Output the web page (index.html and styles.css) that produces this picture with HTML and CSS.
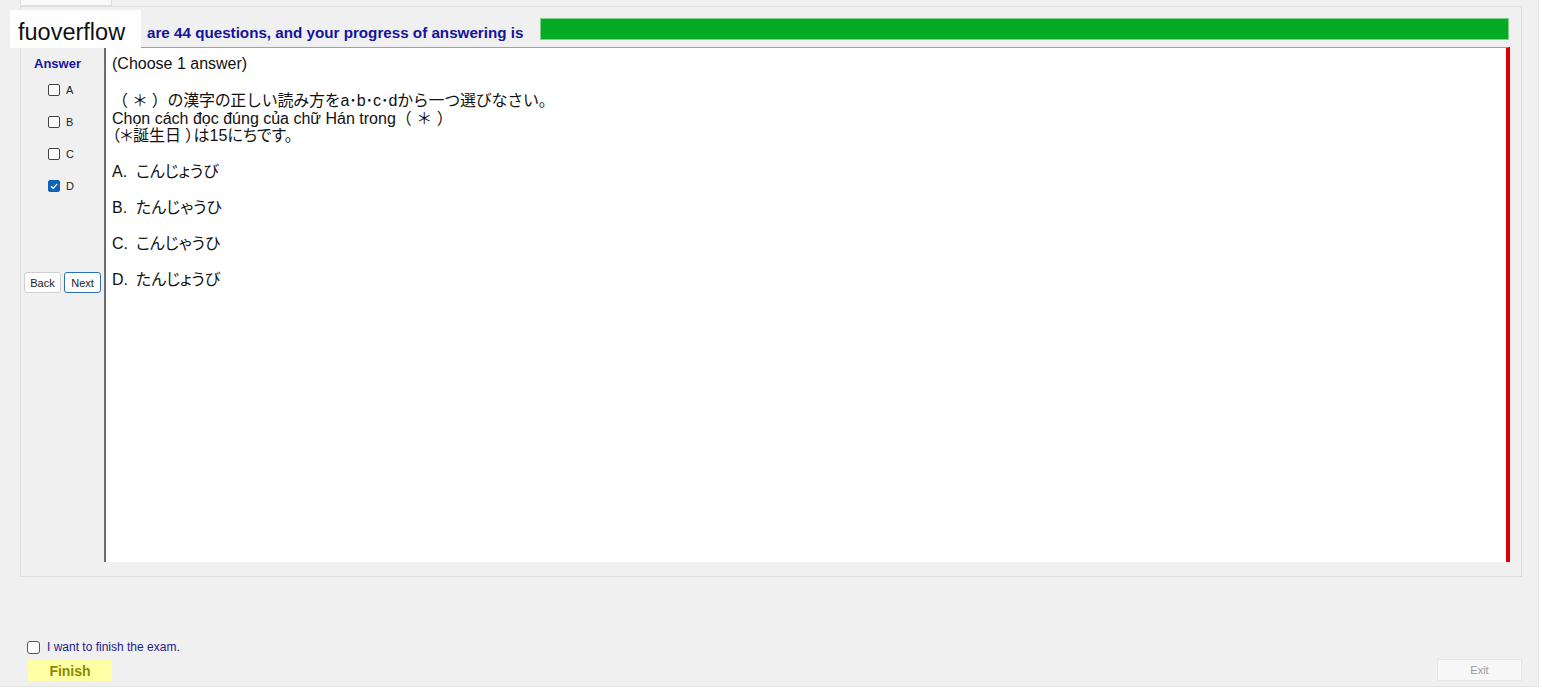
FILE: index.html
```html
<!DOCTYPE html>
<html lang="en">
<head>
  <meta charset="UTF-8" />
  <title>Exam</title>
  <link rel="stylesheet" href="styles.css">
</head>
<body>
  <div class="window">
    <div class="tab"></div>
    <div class="panel">
      <div class="head">
        <span class="head-text">are 44 questions, and your progress of answering is</span>
        <div class="progress"></div>
      </div>
      <div class="main">
        <div class="side">
          <div class="answer-title">Answer</div>
          <div class="opts">
            <label class="opt"><span class="box"></span>A</label>
            <label class="opt"><span class="box"></span>B</label>
            <label class="opt"><span class="box"></span>C</label>
            <label class="opt"><span class="box checked"><svg viewBox="0 0 12 12" width="12" height="12"><path d="M3 6.2 L5.2 8.3 L9.2 3.8" fill="none" stroke="#fff" stroke-width="1.2"/></svg></span>D</label>
          </div>
          <div class="nav">
            <button class="btn">Back</button>
            <button class="btn next">Next</button>
          </div>
        </div>
        <div class="content">
          <div class="line">(Choose 1 answer)</div>
          <div class="question">
            <div class="tight">（ ＊ ）の漢字の正しい読み方をa･b･c･dから一つ選びなさい。</div>
            <div>Chọn cách đọc đúng của chữ Hán trong（ ＊ ）</div>
            <div class="prop">（＊誕生日 ）は15にちです。</div>
          </div>
          <div class="choice prop"><span class="letter">A.</span>こんじょうび</div>
          <div class="choice prop"><span class="letter">B.</span>たんじゃうひ</div>
          <div class="choice prop"><span class="letter">C.</span>こんじゃうひ</div>
          <div class="choice prop"><span class="letter">D.</span>たんじょうび</div>
        </div>
      </div>
    </div>
    <div class="footer">
      <div class="finish-block">
        <label class="finish-check"><span class="box round"></span>I want to finish the exam.</label>
        <button class="finish">Finish</button>
      </div>
      <button class="exit">Exit</button>
    </div>
    <div class="watermark">fuoverflow</div>
  </div>
</body>
</html>
```

FILE: styles.css
```css
body {
  margin: 0;
  background: #fff;
  font-family: "Liberation Sans", "Noto Sans CJK JP", sans-serif;
}
.window {
  position: relative;
  width: 1538px;
  height: 686px;
  background: #f0f0f0;
  border-right: 1px solid #e4e4e4;
  border-bottom: 1px solid #e4e4e4;
}
.tab {
  margin-left: 20px;
  width: 90px;
  height: 5px;
  background: #f9f9f9;
  border: 1px solid #dedede;
  border-top: none;
}
.panel {
  margin-left: 20px;
  width: 1502px;
  height: 571px;
  box-sizing: border-box;
  border: 1px solid #dcdcdc;
}
.head {
  display: flex;
  align-items: flex-start;
  height: 22px;
  margin-top: 11px;
  padding: 0 12px 0 126px;
}
.head-text {
  padding-top: 7px;
  font-size: 15.2px;
  line-height: 16px;
  font-weight: bold;
  color: #14149c;
  white-space: nowrap;
}
.progress {
  flex: 1;
  height: 22px;
  margin-left: 17px;
  box-sizing: border-box;
  background: #05ab24;
  border: 1px solid #7fd08c;
}
.main {
  display: flex;
  margin-top: 7px;
}
.side {
  width: 83px;
}
.answer-title {
  padding: 9px 0 0 13px;
  font-size: 13px;
  line-height: 15px;
  font-weight: bold;
  color: #14149c;
}
.opts {
  display: flex;
  flex-direction: column;
  gap: 12px;
  margin-top: 9px;
}
.opt {
  display: flex;
  align-items: center;
  gap: 6px;
  height: 20px;
  padding-left: 27px;
  font-size: 11px;
  color: #222;
}
.box {
  width: 10px;
  height: 10px;
  border: 1px solid #444;
  border-radius: 2px;
  background: #fff;
  display: flex;
}
.box.checked {
  background: #0f62b8;
  border-color: #0f62b8;
}
.box svg {
  margin: -1px;
}
.nav {
  display: flex;
  gap: 3px;
  margin: 76px 0 0 3px;
}
.btn {
  width: 37px;
  height: 21px;
  padding: 0;
  font-family: "Liberation Sans", sans-serif;
  font-size: 11px;
  color: #222;
  background: #fdfdfd;
  border: 1px solid #d0d0d0;
  border-radius: 3px;
}
.btn.next {
  border-color: #2a6fb8;
}
.content {
  width: 1406px;
  height: 515px;
  box-sizing: border-box;
  background: #fff;
  border-top: 1px solid #a0a0a0;
  border-left: 2px solid #6d6d6d;
  border-right: 4px solid #e00000;
  padding: 7px 0 0 6px;
  font-size: 16px;
  color: #111;
}
.prop {
  font-feature-settings: "palt";
}
.tight {
  letter-spacing: -0.28px;
}
.line {
  line-height: 18px;
}
.question {
  margin-top: 19px;
  line-height: 17.5px;
}
.choice {
  margin-top: 18px;
  line-height: 18px;
}
.letter {
  display: inline-block;
  width: 24px;
}
.footer {
  display: flex;
  justify-content: space-between;
  align-items: flex-end;
  width: 1495px;
  margin: 62px 0 0 27px;
}
.finish-block {
  display: flex;
  flex-direction: column;
  gap: 5px;
}
.finish-check {
  display: flex;
  align-items: center;
  gap: 7px;
  height: 16px;
  font-size: 12px;
  color: #1c1c8c;
}
.box.round {
  width: 11px;
  height: 11px;
  border-radius: 3px;
  border-color: #555;
}
.finish {
  width: 84px;
  height: 21px;
  margin-left: 1px;
  padding: 0;
  border: none;
  background: #ffffa6;
  color: #8a8a00;
  font-family: "Liberation Sans", sans-serif;
  font-size: 14px;
  font-weight: bold;
}
.exit {
  width: 85px;
  height: 22px;
  padding: 0;
  background: #f7f7f7;
  border: 1px solid #e6e6e6;
  color: #9a9a9a;
  font-family: "Liberation Sans", sans-serif;
  font-size: 11px;
}
.watermark {
  position: absolute;
  left: 10px;
  top: 10px;
  width: 131px;
  height: 38px;
  box-sizing: border-box;
  padding: 9px 0 0 8px;
  background: #fff;
  font-size: 23.5px;
  line-height: 26px;
  color: #111;
}
```
